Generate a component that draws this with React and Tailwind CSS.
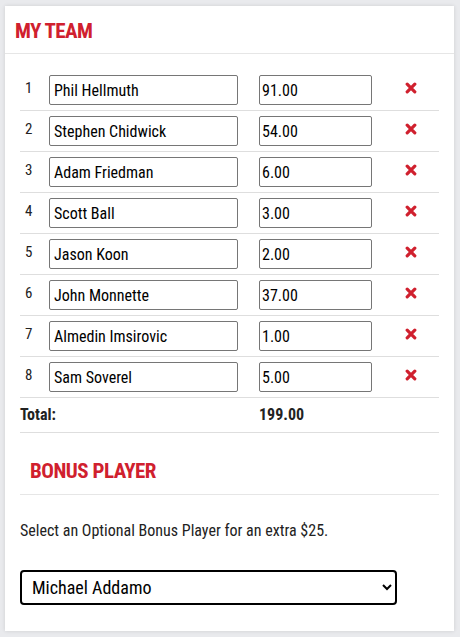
import { useState } from 'react'

const initialTeam = [
  { name: 'Phil Hellmuth', points: '91.00' },
  { name: 'Stephen Chidwick', points: '54.00' },
  { name: 'Adam Friedman', points: '6.00' },
  { name: 'Scott Ball', points: '3.00' },
  { name: 'Jason Koon', points: '2.00' },
  { name: 'John Monnette', points: '37.00' },
  { name: 'Almedin Imsirovic', points: '1.00' },
  { name: 'Sam Soverel', points: '5.00' },
]

const RemoveIcon = () => (
  <svg width="12" height="12" viewBox="0 0 12 12" className="block">
    <path d="M2.2 2.2 L9.8 9.8 M9.8 2.2 L2.2 9.8" stroke="#d0202e" strokeWidth="3.2" strokeLinecap="round" />
  </svg>
)

const App = () => {
  const [team, setTeam] = useState(initialTeam)
  const [bonus, setBonus] = useState('Michael Addamo')

  const total = team.reduce((sum, p) => sum + parseFloat(p.points || 0), 0)

  return (
    <div
      className="min-h-screen bg-[#e9eaed] pt-[6px] pl-[5px] pr-[6px] pb-[6px]"
      style={{ fontFamily: '"Roboto Condensed", Roboto, sans-serif' }}
    >
      <div className="bg-white shadow-[0_0_4px_rgba(0,0,0,0.12)] h-[625px]">
        {/* Header */}
        <div className="h-[48px] border-b border-[#e6e6e6] pl-[10px] flex items-center">
          <h2 className="text-[21px] font-bold text-[#d0202e] tracking-[-0.6px] pt-[4px]">MY TEAM</h2>
        </div>

        <div className="px-[15px] pt-[16px]">
          {team.map((player, i) => (
            <div key={i} className="flex items-center h-[41px] border-b border-[#dedede]">
              <div className="w-[29px] pl-[5px] text-[15px] leading-[20px] text-[#222] self-start pt-[8px]">{i + 1}</div>
              <input
                value={player.name}
                onChange={(e) => {
                  const next = [...team]
                  next[i] = { ...next[i], name: e.target.value }
                  setTeam(next)
                }}
                className="w-[189px] h-[30px] border border-[#767676] rounded-[2px] px-[4px] text-[16px] text-black outline-none"
              />
              <div className="w-[21px]" />
              <input
                value={player.points}
                onChange={(e) => {
                  const next = [...team]
                  next[i] = { ...next[i], points: e.target.value }
                  setTeam(next)
                }}
                className="w-[113px] h-[30px] border border-[#767676] rounded-[2px] px-[2px] text-[16px] text-black outline-none"
              />
              <div className="w-[33px]" />
              <button
                onClick={() => setTeam(team.filter((_, j) => j !== i))}
                className="w-[12px] h-[12px] -mt-[5px]"
              >
                <RemoveIcon />
              </button>
            </div>
          ))}

          {/* Total */}
          <div className="flex items-center h-[35px] border-b border-[#dedede] text-[16px] font-bold text-[#222]">
            <div className="w-[239px]">Total:</div>
            <div>{total.toFixed(2)}</div>
          </div>

          {/* Bonus player */}
          <div className="h-[62px] border-b border-[#e6e6e6] pl-[10px] flex items-center">
            <h2 className="text-[21px] font-bold text-[#d0202e] tracking-[-0.5px] pt-[16px]">BONUS PLAYER</h2>
          </div>

          <p className="text-[16px] leading-[24px] text-[#222] mt-[24px]">Select an Optional Bonus Player for an extra $25.</p>

          <select
            value={bonus}
            onChange={(e) => setBonus(e.target.value)}
            className="mt-[27px] w-[377px] h-[35px] border-2 border-black rounded-[4px] pl-[6px] text-[18px] text-black bg-white"
          >
            <option>Michael Addamo</option>
            <option>Daniel Negreanu</option>
            <option>Phil Ivey</option>
          </select>
        </div>
      </div>
    </div>
  )
}

export default App
